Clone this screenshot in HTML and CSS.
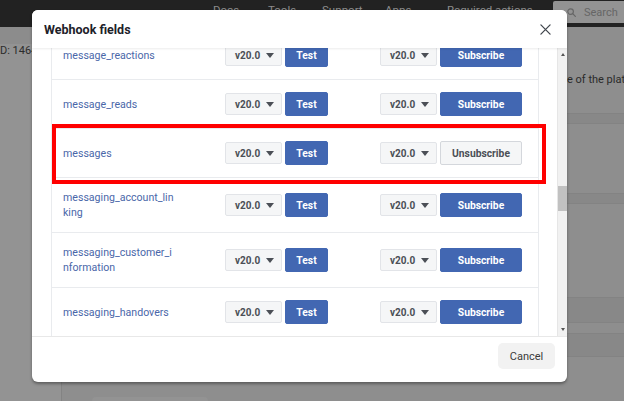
FILE: index.html
```html
<!DOCTYPE html>
<html>
<head>
<meta charset="utf-8">
<link rel="stylesheet" href="styles.css">
</head>
<body>
<div class="page">
  <header class="topbar">
    <nav class="nav">
      <span class="nav-item">Docs</span>
      <span class="nav-item">Tools</span>
      <span class="nav-item">Support</span>
      <span class="nav-item">Apps</span>
      <span class="nav-item">Required actions</span>
    </nav>
    <div class="search">
      <svg class="search-icon" viewBox="0 0 10 10" width="9" height="9"><circle cx="4" cy="4" r="3.1" fill="none" stroke="#666" stroke-width="1.3"/><path d="M6.3 6.3 L9.3 9.3" stroke="#666" stroke-width="1.4" stroke-linecap="round"/></svg>
      <span>Search</span>
    </div>
  </header>
  <div class="content">
    <aside class="side">
      <div class="side-head"></div>
      <div class="appid">D: 1464</div>
    </aside>
    <main class="main">
      <p class="intro">e of the platf</p>
      <div class="band b1"></div>
      <div class="block k1"></div>
      <div class="band b2"></div>
      <div class="block k2"></div>
      <div class="band b3"></div>
      <div class="block k3"></div>
      <div class="band b4"></div>
      <div class="bottom-box"></div>
    </main>
  </div>
</div>

<div class="modal">
  <div class="modal-head">
    <h1 class="modal-title">Webhook fields</h1>
    <svg class="close" viewBox="0 0 12 12" width="11" height="11"><path d="M1 1 L11 11 M11 1 L1 11" stroke="#444950" stroke-width="1.4" stroke-linecap="round"/></svg>
  </div>
  <div class="modal-body">
    <div class="scroll">
      <div class="fields">
        <div class="row">
          <div class="name">message_reactions</div>
          <div class="group"><span class="ver">v20.0<i class="caret"></i></span><button class="btn btn-test">Test</button></div>
          <div class="group"><span class="ver">v20.0<i class="caret"></i></span><button class="btn btn-sub">Subscribe</button></div>
        </div>
        <div class="row">
          <div class="name">message_reads</div>
          <div class="group"><span class="ver">v20.0<i class="caret"></i></span><button class="btn btn-test">Test</button></div>
          <div class="group"><span class="ver">v20.0<i class="caret"></i></span><button class="btn btn-sub">Subscribe</button></div>
        </div>
        <div class="row">
          <div class="name">messages</div>
          <div class="group"><span class="ver">v20.0<i class="caret"></i></span><button class="btn btn-test">Test</button></div>
          <div class="group"><span class="ver">v20.0<i class="caret"></i></span><button class="btn btn-sub btn-light">Unsubscribe</button></div>
        </div>
        <div class="row">
          <div class="name">messaging_account_linking</div>
          <div class="group"><span class="ver">v20.0<i class="caret"></i></span><button class="btn btn-test">Test</button></div>
          <div class="group"><span class="ver">v20.0<i class="caret"></i></span><button class="btn btn-sub">Subscribe</button></div>
        </div>
        <div class="row">
          <div class="name">messaging_customer_information</div>
          <div class="group"><span class="ver">v20.0<i class="caret"></i></span><button class="btn btn-test">Test</button></div>
          <div class="group"><span class="ver">v20.0<i class="caret"></i></span><button class="btn btn-sub">Subscribe</button></div>
        </div>
        <div class="row">
          <div class="name">messaging_handovers</div>
          <div class="group"><span class="ver">v20.0<i class="caret"></i></span><button class="btn btn-test">Test</button></div>
          <div class="group"><span class="ver">v20.0<i class="caret"></i></span><button class="btn btn-sub">Subscribe</button></div>
        </div>
        <div class="row-filler"></div>
      </div>
    </div>
    <div class="scrollbar">
      <i class="sb-up"></i>
      <div class="sb-track"><div class="sb-thumb"></div></div>
      <i class="sb-down"></i>
    </div>
  </div>
  <div class="modal-foot">
    <button class="cancel">Cancel</button>
  </div>
  <div class="highlight"></div>
</div>
</body>
</html>
```

FILE: styles.css
```css
* { box-sizing: border-box; margin: 0; padding: 0; }
html, body { width: 624px; height: 401px; overflow: hidden; }
body {
  background: #8e8e8e;
  font-family: Roboto, "Liberation Sans", Arial, sans-serif;
  position: relative;
}

/* background page (dimmed) */
.page { width: 624px; height: 401px; display: flex; flex-direction: column; overflow: hidden; }
.topbar { height: 27px; flex: none; background: #222222; display: flex; align-items: flex-start; }
.nav {
  display: grid;
  grid-template-columns: 55px 54px 63px 62px auto;
  margin-left: 213px;
  padding-top: 3px;
  font-size: 11.5px;
  line-height: 14px;
  color: #8c8c8c;
}
.search {
  margin-left: auto;
  margin-top: 1px;
  width: 71px;
  height: 22px;
  background: #939393;
  border-radius: 2px 0 0 2px;
  display: flex;
  align-items: center;
  gap: 8px;
  padding-left: 14px;
  font-size: 11px;
  color: #666;
}
.search-icon { flex: none; }

.content { flex: 1; display: flex; min-height: 0; }
.side { width: 62px; flex: none; background: #939393; border-right: 1px solid #838383; display: flex; flex-direction: column; }
.side-head { height: 17px; background: #8c8c8c; }
.appid { font-size: 11px; color: #2c2c2c; line-height: 14px; white-space: nowrap; }

.main { flex: 1; display: flex; flex-direction: column; }
.intro {
  padding-left: 505px;
  padding-top: 46px;
  height: 86px;
  flex: none;
  font-size: 11px;
  line-height: 14px;
  color: #2a2a2a;
  white-space: nowrap;
}
.band { background: #888888; border-top: 1px solid #838383; border-bottom: 1px solid #838383; flex: none; }
.b1 { height: 11px; }
.b2 { height: 11px; }
.b3 { height: 26px; }
.b4 { height: 24px; }
.block { flex: none; }
.k1 { height: 69px; }
.k2 { height: 93px; }
.k3 { height: 10px; }
.bottom-box { margin: 40px 0 0 30px; width: 116px; height: 20px; background: #939393; border-radius: 4px; flex: none; }

/* modal */
.modal {
  position: absolute;
  left: 32px;
  top: 10px;
  width: 535px;
  height: 372px;
  background: #fff;
  border-radius: 6px;
  box-shadow: 0 2px 3px rgba(0,0,0,0.35);
  display: flex;
  flex-direction: column;
  overflow: hidden;
}
.modal-head {
  height: 38px;
  flex: none;
  display: flex;
  align-items: center;
  justify-content: space-between;
  padding: 1px 16px 0 12px;
  position: relative;
  z-index: 1;
  background: #fff;
  box-shadow: 0 1px 2px rgba(0,0,0,0.08);
}
.modal-title { font-size: 12.5px; font-weight: 700; color: #1d2129; }
.close { display: block; }

.modal-body { flex: 1; display: flex; min-height: 0; }
.scroll { flex: 1; overflow: hidden; padding: 0 18px 0 19px; }
.fields { margin-top: -17px; border-left: 1px solid #e9ebee; border-right: 1px solid #e9ebee; }
.row {
  display: grid;
  grid-template-columns: 162px 155px 1fr;
  align-items: center;
  padding: 12px 0 12px 11px;
  border-bottom: 1px solid #e9ebee;
}
.row-filler { height: 60px; }
.name {
  width: 112px;
  font-size: 10.6px;
  line-height: 15px;
  color: #4a67a9;
  word-break: break-all;
}
.group { display: flex; align-items: center; gap: 3px; }
.ver {
  display: flex;
  align-items: center;
  gap: 6px;
  width: 57px;
  height: 22px;
  padding-left: 9px;
  background: #f5f6f7;
  border: 1px solid #e2e4e8;
  border-radius: 2px;
  font-size: 10px;
  font-weight: 700;
  color: #4b4f56;
}
.caret {
  display: block;
  width: 0;
  height: 0;
  border-left: 4.5px solid transparent;
  border-right: 4.5px solid transparent;
  border-top: 5px solid #4b4f56;
}
.btn {
  height: 24px;
  border: 1px solid #4267b2;
  background: #4267b2;
  border-radius: 2px;
  color: #fff;
  font-family: inherit;
  font-size: 10.3px;
  font-weight: 700;
  text-align: center;
}
.btn-test { width: 43px; }
.btn-sub { width: 82px; }
.btn-light { background: #f5f6f7; border-color: #d4d7dc; color: #4b4f56; }

.scrollbar {
  width: 10px;
  flex: none;
  background: #f1f1f1;
  border-left: 1px solid #e6e6e6;
  display: flex;
  flex-direction: column;
  align-items: center;
}
.sb-up, .sb-down {
  display: block;
  width: 0;
  height: 0;
  border-left: 2.5px solid transparent;
  border-right: 2.5px solid transparent;
}
.sb-up { margin-top: 5px; border-bottom: 3px solid #555; }
.sb-down { margin-bottom: 5px; border-top: 3px solid #555; }
.sb-track { flex: 1; width: 100%; }
.sb-thumb { margin-top: 130px; height: 25px; width: 100%; background: #c1c1c1; }

.modal-foot {
  height: 46px;
  flex: none;
  border-top: 1px solid #e8e8e8;
  display: flex;
  justify-content: flex-end;
  align-items: flex-start;
  padding: 6px 12px 0;
}
.cancel {
  width: 57px;
  height: 26px;
  border: none;
  border-radius: 5px;
  background: #f2f2f2;
  font-family: inherit;
  font-size: 11px;
  color: #3b3b3b;
}

/* annotation */
.highlight {
  position: absolute;
  left: 20px;
  top: 114px;
  width: 494px;
  height: 60px;
  border: 4px solid #ff0000;
  pointer-events: none;
}
```
